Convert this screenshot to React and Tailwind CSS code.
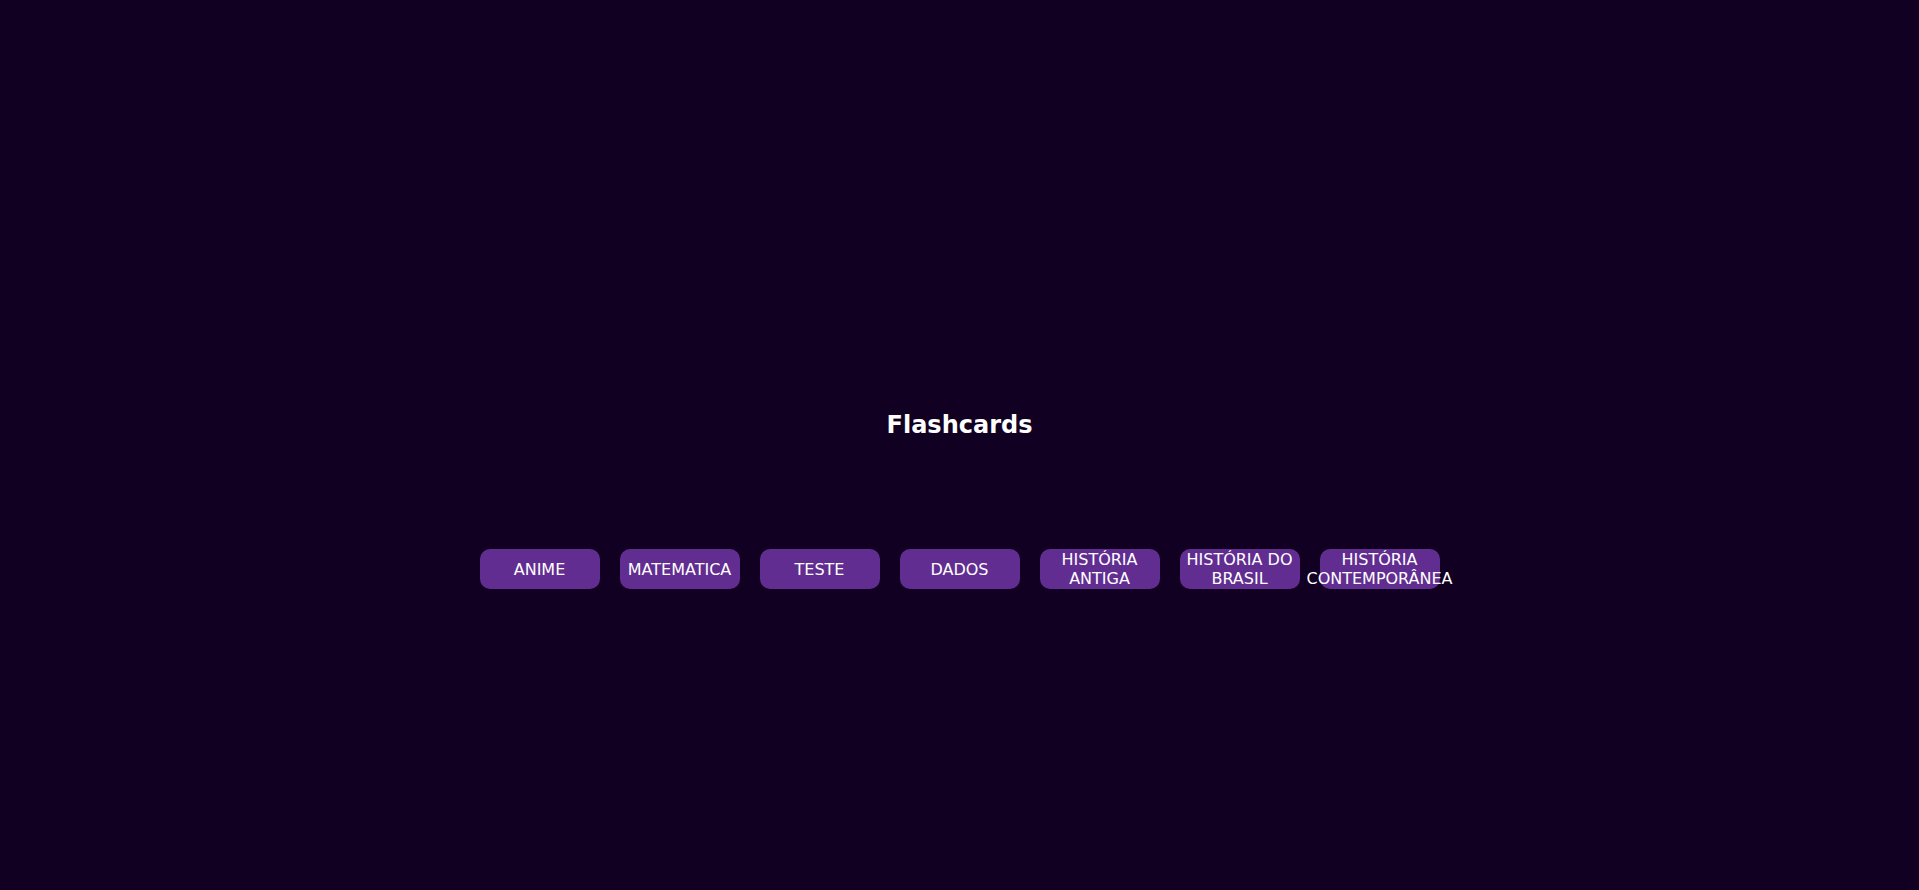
const topics = [
  'ANIME',
  'MATEMATICA',
  'TESTE',
  'DADOS',
  'HISTÓRIA ANTIGA',
  'HISTÓRIA DO BRASIL',
  'HISTÓRIA CONTEMPORÂNEA',
];

export default function App() {
  return (
    <div
      className="h-screen w-full bg-[#110021] flex flex-col items-center justify-center pt-[110px] text-white"
      style={{ fontFamily: '"DejaVu Sans", Verdana, sans-serif' }}
    >
      <h1 className="text-2xl font-bold leading-7">Flashcards</h1>

      {/* Deck buttons */}
      <div className="flex gap-5 mt-[110px]">
        {topics.map((t) => (
          <button
            key={t}
            className="w-[120px] h-10 px-1 rounded-[10px] bg-[#622d91] text-white text-base leading-[19px] text-center flex items-center justify-center cursor-pointer"
          >
            {t}
          </button>
        ))}
      </div>
    </div>
  );
}
